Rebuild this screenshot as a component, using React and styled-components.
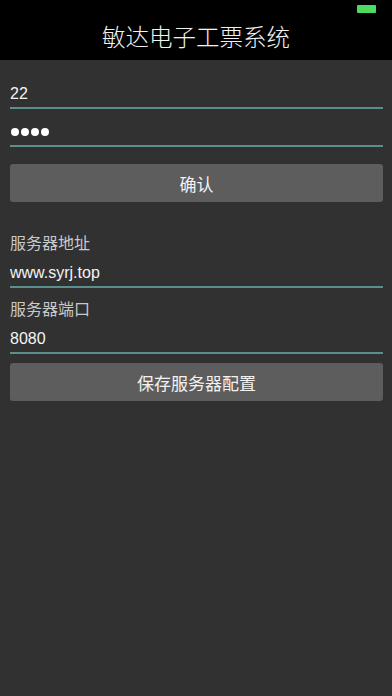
import React from "react";
import styled, { createGlobalStyle } from "styled-components";

const GlobalStyle = createGlobalStyle`
    html, body {
        margin: 0;
        padding: 0;
        background: #313131;
    }
    body {
        font-family: "Liberation Sans", "Noto Sans CJK SC", sans-serif;
    }
`;

const Screen = styled.div`
    width: 392px;
    min-height: 696px;
    background: #313131;
    display: flex;
    flex-direction: column;
`;

const Header = styled.header`
    height: 60px;
    background: #000;
    display: flex;
    flex-direction: column;
`;

const StatusBar = styled.div`
    height: 18px;
    display: flex;
    justify-content: flex-end;
    align-items: flex-start;
    padding: 5px 16px 0 0;
    box-sizing: border-box;
`;

const Battery = styled.div`
    width: 19px;
    height: 8px;
    background: #4cd964;
    border-radius: 1px;
`;

const Title = styled.h1`
    margin: 0;
    flex: 1;
    display: flex;
    align-items: center;
    justify-content: center;
    padding-bottom: 6px;
    color: #f2f2f2;
    font-size: 23.5px;
    font-weight: 300;
    font-family: "Noto Sans CJK SC", sans-serif;
`;

const Form = styled.main`
    display: flex;
    flex-direction: column;
    padding: 11px 9px 0 10px;
`;

const Field = styled.div`
    height: 26px;
    padding-top: ${(p) => (p.$compact ? "8px" : "10px")};
    border-bottom: 2px solid #5b8f8e;
    display: flex;
    align-items: flex-start;
`;

const Input = styled.input`
    appearance: none;
    border: none;
    outline: none;
    background: transparent;
    padding: 0;
    margin: 0;
    width: 100%;
    height: 26px;
    line-height: 26px;
    color: #f4f4f4;
    font-size: 16px;
    font-family: "Liberation Sans", "Noto Sans CJK SC", sans-serif;
`;

const Dots = styled.div`
    display: flex;
    gap: 2px;
    height: 26px;
    align-items: center;
    padding-left: 1px;
`;

const Dot = styled.span`
    width: 8px;
    height: 8px;
    border-radius: 50%;
    background: #fff;
`;

const Button = styled.button`
    margin-top: ${(p) => p.$top || "0px"};
    height: 38px;
    border: none;
    border-radius: 3px;
    background: #5d5d5d;
    color: #f2f2f2;
    font-size: 17px;
    font-family: "Noto Sans CJK SC", sans-serif;
    cursor: pointer;
    padding: 0;
`;

const Label = styled.div`
    margin-top: ${(p) => p.$top};
    height: 20px;
    line-height: 20px;
    color: #c9c9c9;
    font-size: 16px;
    font-family: "Noto Sans CJK SC", sans-serif;
`;

const App = () => {
    return (
        <>
            <GlobalStyle />
            <Screen>
                <Header>
                    <StatusBar>
                        <Battery />
                    </StatusBar>
                    <Title>敏达电子工票系统</Title>
                </Header>
                <Form>
                    <Field>
                        <Input defaultValue="22" />
                    </Field>
                    <Field>
                        <Dots>
                            <Dot />
                            <Dot />
                            <Dot />
                            <Dot />
                        </Dots>
                    </Field>
                    <Button $top="17px">确认</Button>

                    <Label $top="30px">服务器地址</Label>
                    <Field $compact>
                        <Input defaultValue="www.syrj.top" />
                    </Field>
                    <Label $top="10px">服务器端口</Label>
                    <Field $compact>
                        <Input defaultValue="8080" />
                    </Field>
                    <Button $top="9px">保存服务器配置</Button>
                </Form>
            </Screen>
        </>
    );
};

export default App;
